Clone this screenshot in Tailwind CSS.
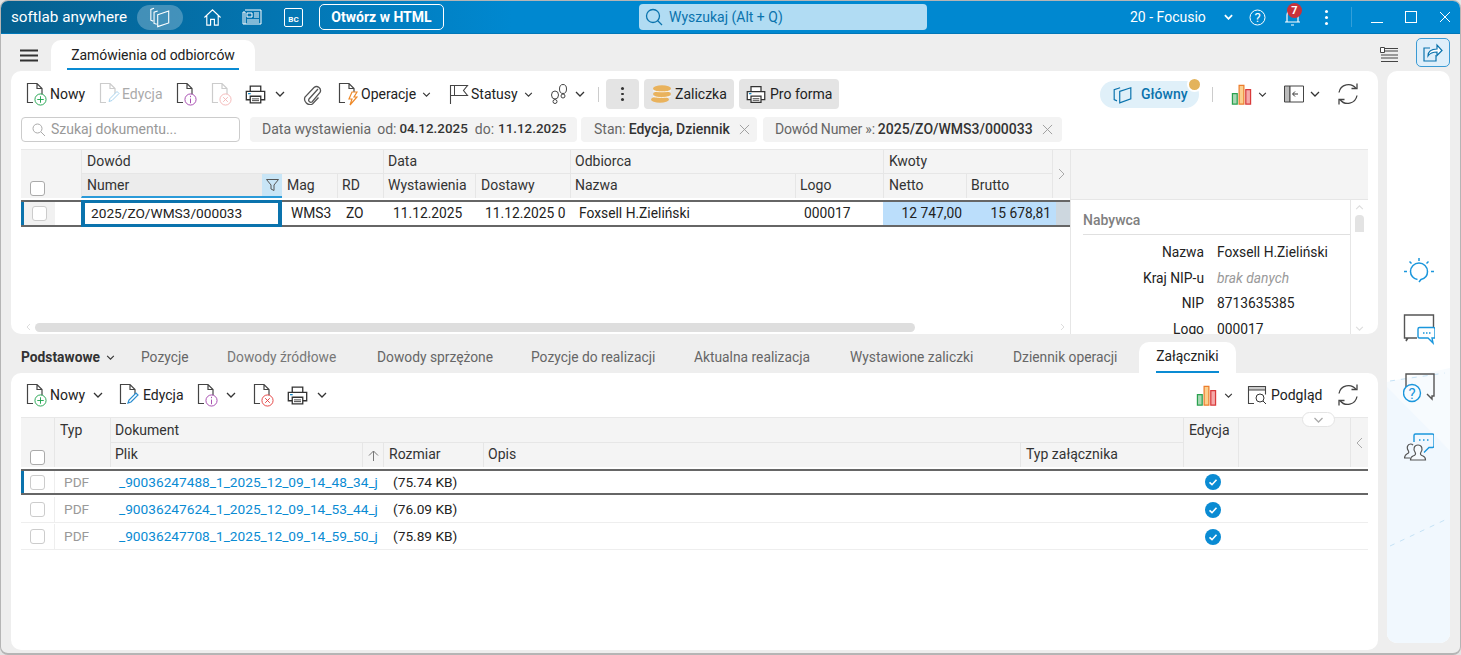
<!doctype html>
<html lang="pl">
<head>
<meta charset="utf-8">
<title>softlab anywhere</title>
<script src="https://cdn.jsdelivr.net/npm/@tailwindcss/browser@4"></script>
</head>
<body class="w-[1461px] h-[655px] overflow-hidden bg-[#e4e4e4] font-['Roboto',sans-serif] text-[14px] text-[#222]">
<svg class="hidden">
  <symbol id="doc" viewBox="0 0 21 24"><path d="M7 20.500H1.500v-19h9.500l5 5v6M11 1.500v5h5" fill="none" stroke="currentColor" stroke-width="1.200"/></symbol>
  <symbol id="print" viewBox="0 0 24 24"><path d="M6 8V2.500h12V8M6 18H1.500V8.500h21V18H18M6 14h12v7.500H6z" fill="#fff" stroke="#333" stroke-width="1.500"/><path d="M8 17h8M8 19h8" stroke="#333"/><path d="M3.500 11h3" stroke="#0a84c6" stroke-width="1.500"/></symbol>
  <symbol id="chev" viewBox="0 0 10 6"><path d="M1 1l4 4 4-4" fill="none" stroke="currentColor" stroke-width="1.300"/></symbol>
  <symbol id="bars" viewBox="0 0 22 22"><path d="M1.500 10h5v11h-5z" fill="#a8d8b4" stroke="#2aa14f" stroke-width="1.300"/><path d="M8.500 1.500h5V21h-5z" fill="#fbd08e" stroke="#ec7d2c" stroke-width="1.300"/><path d="M15.500 6h5v15h-5z" fill="#f5a9a9" stroke="#d93a3a" stroke-width="1.300"/></symbol>
  <symbol id="refresh" viewBox="0 0 24 24"><path d="M3 10.500a9.500 9.500 0 0 1 17-4M21 13.500a9.500 9.500 0 0 1-17 4" fill="none" stroke="#444" stroke-width="1.300"/><path d="M21 1.500v5h-5.500M3 22.500v-5h5.500" fill="none" stroke="#444" stroke-width="1.300"/></symbol>
  <symbol id="stack" viewBox="0 0 24 24"><path d="M9.500 9.500l12-4v13l-12 4z" fill="none" stroke="currentColor" stroke-width="1.200"/><path d="M9.500 5.500l-4 1.300V19l3 1M5.500 2.500l-3.500 1.200V15.500l2.500 1" fill="none" stroke="currentColor" stroke-width="1.200"/></symbol>
  <symbol id="stack2" viewBox="0 0 24 24"><path d="M8.500 8l14-4.500v14l-14 5z" fill="none" stroke="currentColor" stroke-width="1.500"/><path d="M9 3.500L1.500 6v12.500l3.500 1.500" fill="none" stroke="currentColor" stroke-width="1.500"/></symbol>
  <symbol id="x" viewBox="0 0 12 12"><path d="M1 1l10 10M11 1L1 11" stroke="currentColor" stroke-width="1"/></symbol>
  <symbol id="check" viewBox="0 0 16 16"><circle cx="8" cy="8" r="8" fill="#0a8bd3"/><path d="M4.500 8.300l2.500 2.400 4.500-5" fill="none" stroke="#fff" stroke-width="1.600"/></symbol>
</svg>

<div class="w-[1461px] h-[655px] bg-[#eeeeee] border-l border-t border-r border-b-2 border-[#b5b5b5] rounded-[8px] overflow-hidden">
<!-- title bar -->
<header class="h-[33px] flex items-center text-white bg-linear-to-r from-[#05608f] via-[#0088d0] via-35% to-[#0088d0] border-b border-[#0077b8]">
  <span class="ml-[10px] w-[116px] text-[15.250px] whitespace-nowrap">softlab anywhere</span>
  <span class="ml-[10px] w-[46px] h-[25px] rounded-full bg-white/25 flex items-center justify-center">
    <svg class="w-[22px] h-[22px] text-white"><use href="#stack"/></svg>
  </span>
  <svg class="ml-[20px] w-[19px] h-[19px]" viewBox="0 0 20 20"><path d="M1.500 10L10 2l8.500 8M4 8v10h4v-6h4v6h4V8" fill="none" stroke="#fff" stroke-width="1.200"/></svg>
  <svg class="ml-[20px] w-[20px] h-[18px]" viewBox="0 0 20 18"><path d="M3 2h16v14H1V4h2v12M5 5h5v4H5zM12 5h5M12 7h5M12 9h5M5 12h12M5 14h12" fill="none" stroke="#fff" stroke-width="1"/></svg>
  <span class="ml-[22px] w-[19px] h-[19px] border border-white rounded-[2px] flex items-end justify-center text-[8px] font-bold leading-[12px]">BC</span>
  <span class="ml-[16px] w-[125px] h-[26px] border border-white rounded-[5px] flex items-center justify-center font-bold text-[14px]">Otwórz w HTML</span>
  <div class="ml-[195px] w-[288px] h-[26px] rounded-[4px] bg-[#b1dcf3] text-[#0a73ad] flex items-center">
    <svg class="ml-[6px] w-[18px] h-[18px]" viewBox="0 0 18 18"><circle cx="8" cy="8" r="6.500" fill="none" stroke="currentColor" stroke-width="1.300"/><path d="M12.500 12.500l4.500 4.500" stroke="currentColor" stroke-width="1.300"/></svg>
    <span class="ml-[6px]">Wyszukaj (Alt + Q)</span>
  </div>
  <span class="ml-[203px] w-[74px] text-[14px] whitespace-nowrap">20 - Focusio</span>
  <svg class="ml-[20px] w-[9px] h-[6px]" viewBox="0 0 10 6"><path d="M1 1l4 4 4-4" fill="none" stroke="#fff" stroke-width="2"/></svg>
  <svg class="ml-[16px] w-[17px] h-[17px]" viewBox="0 0 17 17"><circle cx="8.500" cy="8.500" r="7.500" fill="none" stroke="#fff"/><text x="8.500" y="13" text-anchor="middle" font-size="13" fill="#fff" font-family="Roboto">?</text></svg>
  <span class="relative ml-[18px] w-[17px] h-[20px]">
    <svg class="w-[17px] h-[20px]" viewBox="0 0 17 20"><path d="M1 15h15M3 15V8a5.500 5.500 0 0 1 11 0v7M7 18h3" fill="none" stroke="#fff" stroke-width="1.200"/></svg>
    <span class="absolute left-[3px] top-[-4px] w-[15px] h-[15px] rounded-full bg-[#c8323a] text-[11px] font-bold leading-[15px] text-center">7</span>
  </span>
  <span class="ml-[24px] flex flex-col gap-[3px]"><i class="block w-[3px] h-[3px] bg-white rounded-full"></i><i class="block w-[3px] h-[3px] bg-white rounded-full"></i><i class="block w-[3px] h-[3px] bg-white rounded-full"></i></span>
  <span class="ml-[23px] w-px h-[20px] bg-white/20"></span>
  <span class="ml-[19px] w-[12px] h-px bg-white mt-[10px]"></span>
  <span class="ml-[22px] w-[12px] h-[12px] border border-white"></span>
  <svg class="ml-[22px] w-[12px] h-[12px] text-white"><use href="#x"/></svg>
</header>

<div class="flex h-[619px]">
  <!-- main area -->
  <main class="ml-[10px] w-[1367px] flex flex-col mb-[3px]">
    <!-- document tab row -->
    <div class="h-[37px] flex items-end">
      <svg class="ml-[9px] mb-[9px] w-[19px] h-[13px]" viewBox="0 0 19 13"><path d="M0 1.500h18M0 6.500h18M0 11.500h18" stroke="#333" stroke-width="2"/></svg>
      <div class="ml-[12px] w-[204px] h-[31px] bg-white rounded-t-[10px] flex flex-col items-center">
        <span class="mt-[7px] leading-[16px] whitespace-nowrap tracking-[-0.05px]">Zamówienia od odbiorców</span>
        <span class="mt-[5px] w-[172px] h-[2px] bg-[#0a8bd3]"></span>
      </div>
    </div>

    <!-- upper panel -->
    <section class="h-[263px] bg-white rounded-[10px] flex flex-col">
      <!-- toolbar -->
      <div class="h-[46px] flex items-center">
        <span class="ml-[15px] relative w-[21px] h-[24px] text-[#444]">
          <svg class="w-[21px] h-[24px]"><use href="#doc"/></svg>
          <svg class="absolute left-[8px] top-[11px] w-[13px] h-[13px]" viewBox="0 0 14 14"><circle cx="7" cy="7" r="6" fill="#fff" stroke="#1ea34d"/><path d="M7 3.500v7M3.500 7h7" stroke="#1ea34d"/></svg>
        </span>
        <span class="ml-[3px] w-[35px]">Nowy</span>
        <span class="ml-[14px] relative w-[21px] h-[24px] text-[#ccc]">
          <svg class="w-[21px] h-[24px]"><use href="#doc"/></svg>
          <svg class="absolute left-[8px] top-[7px] w-[14px] h-[15px]" viewBox="0 0 14 14"><path d="M2 12l1-3 7-7 2 2-7 7z" fill="#fff" stroke="#a9d3ee"/></svg>
        </span>
        <span class="ml-[2px] w-[40px] text-[#aaa]">Edycja</span>
        <span class="ml-[14px] relative w-[21px] h-[24px] text-[#444]">
          <svg class="w-[21px] h-[24px]"><use href="#doc"/></svg>
          <svg class="absolute left-[8px] top-[11px] w-[13px] h-[13px]" viewBox="0 0 14 14"><circle cx="7" cy="7" r="6" fill="#fff" stroke="#a344ad"/><path d="M7 6v5M7 3v1.500" stroke="#a344ad"/></svg>
        </span>
        <span class="ml-[14px] relative w-[21px] h-[24px] text-[#ccc]">
          <svg class="w-[21px] h-[24px]"><use href="#doc"/></svg>
          <svg class="absolute left-[8px] top-[11px] w-[13px] h-[13px]" viewBox="0 0 14 14"><circle cx="7" cy="7" r="6" fill="#fff" stroke="#f3b5b5"/><path d="M4.500 4.500l5 5M9.500 4.500l-5 5" stroke="#f3b5b5"/></svg>
        </span>
        <svg class="ml-[13px] w-[21px] h-[21px]"><use href="#print"/></svg>
        <svg class="ml-[9px] w-[10px] h-[6px] text-[#333]"><use href="#chev"/></svg>
        <svg class="ml-[17px] w-[20px] h-[22px]" viewBox="0 0 20 22"><path d="M16 6L7 16a2.200 2.200 0 0 0 3 3l8-9.500a4 4 0 0 0-6-5L3 14a5.500 5.500 0 0 0 7.500 7l6-6.500" fill="none" stroke="#555" stroke-width="1.300"/></svg>
        <span class="ml-[16px] relative w-[21px] h-[24px] text-[#444]">
          <svg class="w-[21px] h-[24px]"><use href="#doc"/></svg>
          <svg class="absolute left-[9px] top-[9px] w-[11px] h-[15px]" viewBox="0 0 11 15"><path d="M5 1h5L7 6h3l-7 8 2-6H2z" fill="#fff" stroke="#ee8a2b" stroke-width="1.200"/></svg>
        </span>
        <span class="ml-[2px] w-[55px]">Operacje</span>
        <svg class="ml-[6px] w-[9px] h-[5px] text-[#333]"><use href="#chev"/></svg>
        <svg class="ml-[18px] w-[20px] h-[20px]" viewBox="0 0 20 20"><path d="M1.500 20V1.500h17l-4 5 4 5h-17" fill="none" stroke="#444" stroke-width="1.100"/><path d="M5.500 1.500v10" stroke="#444"/></svg>
        <span class="ml-[2px] w-[47px]">Statusy</span>
        <svg class="ml-[6px] w-[9px] h-[5px] text-[#333]"><use href="#chev"/></svg>
        <svg class="ml-[17px] w-[18px] h-[20px]" viewBox="0 0 18 20"><g fill="none" stroke="#444"><ellipse cx="13" cy="5" rx="3.500" ry="4.500"/><circle cx="13" cy="12" r="2"/><ellipse cx="5" cy="11" rx="3.500" ry="4"/><circle cx="5" cy="17.500" r="2"/></g></svg>
        <svg class="ml-[7px] w-[10px] h-[6px] text-[#333]"><use href="#chev"/></svg>
        <span class="ml-[13px] w-px h-[15px] bg-[#ccc]"></span>
        <span class="ml-[7px] w-[33px] h-[30px] rounded-[4px] bg-[#e4e4e4] flex flex-col items-center justify-center gap-[3px]"><i class="block w-[2.500px] h-[2.500px] bg-[#333] rounded-full"></i><i class="block w-[2.500px] h-[2.500px] bg-[#333] rounded-full"></i><i class="block w-[2.500px] h-[2.500px] bg-[#333] rounded-full"></i></span>
        <span class="ml-[5px] w-[90px] h-[30px] rounded-[4px] bg-[#e4e4e4] flex items-center">
          <svg class="ml-[7px] w-[20px] h-[18px]" viewBox="0 0 20 18"><g fill="#e9b25c"><ellipse cx="11" cy="3.500" rx="9" ry="3.200"/><ellipse cx="11" cy="9" rx="9" ry="3.200"/><ellipse cx="9" cy="14.500" rx="9" ry="3.200"/></g><path d="M2 5.800c3 1.300 15 1.300 18 0M2 11.500c3 1.300 14 1.300 17.500 0" fill="none" stroke="#fff" stroke-width=".8"/></svg>
          <span class="ml-[4px]">Zaliczka</span>
        </span>
        <span class="ml-[5px] w-[100px] h-[30px] rounded-[4px] bg-[#e4e4e4] flex items-center">
          <svg class="ml-[7px] w-[20px] h-[21px]"><use href="#print"/></svg>
          <span class="ml-[4px]">Pro forma</span>
        </span>
        <div class="ml-[261px] relative w-[99px] h-[27px] rounded-full bg-[#e0f0f9] text-[#0a73ad] flex items-center">
          <svg class="ml-[13px] w-[19px] h-[19px]"><use href="#stack2"/></svg>
          <span class="ml-[9px] font-medium">Główny</span>
          <span class="absolute right-[-3px] top-[-4px] w-[11px] h-[11px] rounded-full bg-[#e3b35b] border-2 border-white box-content"></span>
        </div>
        <span class="ml-[13px] w-px h-[15px] bg-[#ccc]"></span>
        <svg class="ml-[18px] w-[21px] h-[21px]"><use href="#bars"/></svg>
        <svg class="ml-[6px] w-[9px] h-[5px] text-[#333]"><use href="#chev"/></svg>
        <svg class="ml-[17px] w-[20px] h-[18px]" viewBox="0 0 20 18"><path d="M.500 1h5.500v16H.500z" fill="#bbb" stroke="#444"/><path d="M6 1h13.500v16H6z" fill="#fff" stroke="#444"/><path d="M14 9H9M11 6.500L8.500 9l2.500 2.500" fill="none" stroke="#333"/></svg>
        <svg class="ml-[6px] w-[10px] h-[6px] text-[#333]"><use href="#chev"/></svg>
        <svg class="ml-[16px] w-[24px] h-[24px]"><use href="#refresh"/></svg>
      </div>

      <!-- filter row -->
      <div class="h-[32px] flex items-start text-[#666]">
        <div class="ml-[10px] w-[219px] h-[25px] border border-[#ccc] rounded-[4px] flex items-center text-[#999]">
          <svg class="ml-[10px] w-[13px] h-[13px]" viewBox="0 0 13 13"><circle cx="5.500" cy="5.500" r="4.500" fill="none" stroke="#aaa"/><path d="M9 9l4 4" stroke="#aaa"/></svg>
          <span class="ml-[6px]">Szukaj dokumentu...</span>
        </div>
        <div class="ml-[10px] w-[327px] h-[25px] rounded-[4px] bg-[#f3f3f3] flex items-center pl-[12px] whitespace-nowrap">Data wystawienia<span class="ml-[6px]">od:</span><b class="ml-[3px] font-medium text-[#333] text-[13.400px]">04.12.2025</b><span class="ml-[7px]">do:</span><b class="ml-[4px] font-medium text-[#333] text-[13.400px]">11.12.2025</b></div>
        <div class="ml-[4px] w-[176px] h-[25px] rounded-[4px] bg-[#f3f3f3] flex items-center pl-[13px] whitespace-nowrap">Stan:<b class="ml-[3px] font-medium text-[#333]">Edycja, Dziennik</b><svg class="ml-[9px] w-[11px] h-[11px] text-[#999]"><use href="#x"/></svg></div>
        <div class="ml-[6px] w-[299px] h-[25px] rounded-[4px] bg-[#f3f3f3] flex items-center pl-[12px] whitespace-nowrap"><span class="tracking-[-0.2px]">Dowód Numer »:</span><b class="ml-[3px] font-medium text-[#333]">2025/ZO/WMS3/000033</b><svg class="ml-[9px] w-[11px] h-[11px] text-[#999]"><use href="#x"/></svg></div>
      </div>

      <!-- grid + side panel -->
      <div class="ml-[10px] w-[1347px] flex-1 min-h-0 flex border-t border-[#e8e8e8] overflow-hidden">
        <div class="w-[1049px] relative">
          <div class="h-[48px] bg-[#f4f4f4] grid grid-cols-[60px_201px_55px_46px_92px_95px_225px_88px_83px_86px_18px] grid-rows-[24px_24px] text-[#333] leading-[22px]">
            <div class="row-span-2 relative"><span class="absolute left-[9px] bottom-[2px] w-[15px] h-[15px] border border-[#aaa] rounded-[3px] bg-white"></span></div>
            <div class="col-span-3 pl-[5px] border-l border-b border-[#e6e6e6]">Dowód</div>
            <div class="col-span-2 pl-[4px] border-l border-b border-[#e6e6e6]">Data</div>
            <div class="col-span-2 pl-[4px] border-l border-b border-[#e6e6e6]">Odbiorca</div>
            <div class="col-span-2 pl-[5px] border-l border-b border-[#e6e6e6]">Kwoty</div>
            <div class="row-span-2 border-l border-[#e6e6e6] flex items-center justify-center"><svg class="w-[7px] h-[12px]" viewBox="0 0 7 12"><path d="M1 1l5 5-5 5" fill="none" stroke="#aaa"/></svg></div>
            <div class="relative pl-[5px] bg-[#ececec] border-l border-[#e6e6e6] border-b-2 border-b-[#2a9ad8]">Numer<span class="absolute right-0 top-0 w-[20px] h-[22px] bg-[#c8e5f6] flex items-center justify-center"><svg class="w-[13px] h-[12px]" viewBox="0 0 13 12"><path d="M.500 .500h12L8 6v5.500L5 10V6z" fill="none" stroke="#555"/></svg></span></div>
            <div class="pl-[5px]">Mag</div>
            <div class="pl-[4px] border-l border-[#e6e6e6]">RD</div>
            <div class="pl-[4px] border-l border-[#e6e6e6]">Wystawienia</div>
            <div class="pl-[5px] border-l border-[#e6e6e6]">Dostawy</div>
            <div class="pl-[4px] border-l border-[#e6e6e6]">Nazwa</div>
            <div class="pl-[4px] border-l border-[#e6e6e6]">Logo</div>
            <div class="pl-[5px] border-l border-[#e6e6e6]">Netto</div>
            <div class="pl-[4px] border-l border-[#e6e6e6]">Brutto</div>
          </div>
          <div class="h-[27px] mt-[2px] border-y-2 border-[#666] grid grid-cols-[60px_201px_55px_46px_92px_95px_225px_88px_83px_90px_14px] items-center whitespace-nowrap text-[#222] text-[13.800px]">
            <div class="h-full flex items-center border-l-[3px] border-[#0a73ad]"><span class="w-[31px] h-full bg-[#f1f1f1] flex items-center justify-center"><span class="w-[15px] h-[15px] border border-[#ccc] rounded-[3px] bg-white"></span></span></div>
            <div class="h-[27px] -my-[2px] border-y-[3px] border-x-4 border-[#0a73ad] pl-[6px] flex items-center bg-white text-[13.700px]">2025/ZO/WMS3/000033</div>
            <div class="pl-[9px]">WMS3</div>
            <div class="pl-[9px]">ZO</div>
            <div class="pl-[10px]">11.12.2025</div>
            <div class="pl-[10px]">11.12.2025 0</div>
            <div class="pl-[9px]">Foxsell H.Zieliński</div>
            <div class="pl-[9px]">000017</div>
            <div class="h-full bg-[#bbdefb] flex items-center justify-end pr-[4px]">12 747,00</div>
            <div class="h-full bg-[#bbdefb] flex items-center justify-end pr-[5px]">15 678,81</div>
            <div class="h-full bg-[#cdd7df]"></div>
          </div>
          <!-- bottom scrollbar -->
          <div class="absolute left-0 right-0 bottom-0 h-[14px] flex items-center">
            <svg class="ml-[5px] w-[5px] h-[8px]" viewBox="0 0 5 8"><path d="M4 1L1 4l3 3" fill="none" stroke="#ddd"/></svg>
            <span class="ml-[4px] w-[880px] h-[9px] rounded-full bg-[#dedede]"></span>
            <svg class="ml-auto mr-[5px] w-[5px] h-[8px]" viewBox="0 0 5 8"><path d="M1 1l3 3-3 3" fill="none" stroke="#ddd"/></svg>
          </div>
        </div>
        <!-- Nabywca panel -->
        <aside class="w-[298px] border-l border-[#e6e6e6] flex flex-col">
          <div class="h-[50px] bg-[#f4f4f4] border-b border-[#e6e6e6]"></div>
          <div class="flex-1 min-h-0 flex overflow-hidden">
            <div class="ml-[12px] w-[268px] overflow-hidden">
              <div class="h-[35px] pt-[12px] leading-[17px] font-medium text-[#808080] border-b border-[#e0e0e0]">Nabywca</div>
              <div class="mt-[5px] grid grid-cols-[121px_1fr] gap-x-[13px] leading-[25.500px] text-[13.800px]">
                <span class="text-right">Nazwa</span><span>Foxsell H.Zieliński</span>
                <span class="text-right">Kraj NIP-u</span><span class="italic text-[#999]">brak danych</span>
                <span class="text-right">NIP</span><span>8713635385</span>
                <span class="text-right">Logo</span><span>000017</span>
              </div>
            </div>
            <div class="w-[18px] border-l border-[#e6e6e6] flex flex-col items-center">
              <svg class="mt-[5px] w-[9px] h-[5px] text-[#ddd] rotate-180"><use href="#chev"/></svg>
              <span class="mt-[5px] w-[9px] h-[17px] rounded-t-[4px] bg-[#e3e3e3]"></span>
              <svg class="mt-auto mb-[3px] w-[9px] h-[5px] text-[#ddd]"><use href="#chev"/></svg>
            </div>
          </div>
        </aside>
      </div>
    </section>

    <!-- detail tabs -->
    <nav class="h-[39px] flex items-end whitespace-nowrap text-[#666] text-[13.800px]">
      <div class="ml-[10px] h-[31px] flex items-center font-bold text-[#333] w-[94px]">Podstawowe<svg class="ml-[6px] w-[9px] h-[5px]"><use href="#chev"/></svg></div>
      <span class="ml-[26px] w-[48px] h-[31px] leading-[30px]">Pozycje</span>
      <span class="ml-[38px] w-[111px] h-[31px] leading-[30px] text-[#777]">Dowody źródłowe</span>
      <span class="ml-[39px] w-[118px] h-[31px] leading-[30px]">Dowody sprzężone</span>
      <span class="ml-[36px] w-[126px] h-[31px] leading-[30px]">Pozycje do realizacji</span>
      <span class="ml-[37px] w-[118px] h-[31px] leading-[30px]">Aktualna realizacja</span>
      <span class="ml-[38px] w-[125px] h-[31px] leading-[30px]">Wystawione zaliczki</span>
      <span class="ml-[38px] w-[106px] h-[31px] leading-[30px]">Dziennik operacji</span>
      <div class="ml-[20px] w-[97px] h-[31px] bg-white rounded-t-[10px] flex flex-col items-center text-[#222]">
        <span class="mt-[6px] leading-[16px]">Załączniki</span>
        <span class="mt-[7px] w-[63px] h-[2px] bg-[#0a8bd3]"></span>
      </div>
    </nav>

    <!-- lower panel -->
    <section class="flex-1 bg-white rounded-[10px] flex flex-col">
      <div class="h-[44px] flex items-center">
        <span class="ml-[15px] relative w-[21px] h-[24px] text-[#444]">
          <svg class="w-[21px] h-[24px]"><use href="#doc"/></svg>
          <svg class="absolute left-[8px] top-[11px] w-[13px] h-[13px]" viewBox="0 0 14 14"><circle cx="7" cy="7" r="6" fill="#fff" stroke="#1ea34d"/><path d="M7 3.500v7M3.500 7h7" stroke="#1ea34d"/></svg>
        </span>
        <span class="ml-[3px] w-[35px]">Nowy</span>
        <svg class="ml-[8px] w-[10px] h-[6px] text-[#333]"><use href="#chev"/></svg>
        <span class="ml-[16px] relative w-[21px] h-[24px] text-[#444]">
          <svg class="w-[21px] h-[24px]"><use href="#doc"/></svg>
          <svg class="absolute left-[7px] top-[7px] w-[14px] h-[16px]" viewBox="0 0 14 14"><path d="M2 12l1-3 7-7 2 2-7 7z" fill="#fff" stroke="#2a8dd0" stroke-width="1.200"/></svg>
        </span>
        <span class="ml-[3px] w-[40px]">Edycja</span>
        <span class="ml-[14px] relative w-[21px] h-[24px] text-[#444]">
          <svg class="w-[21px] h-[24px]"><use href="#doc"/></svg>
          <svg class="absolute left-[8px] top-[11px] w-[13px] h-[13px]" viewBox="0 0 14 14"><circle cx="7" cy="7" r="6" fill="#fff" stroke="#a344ad"/><path d="M7 6v5M7 3v1.500" stroke="#a344ad"/></svg>
        </span>
        <svg class="ml-[8px] w-[10px] h-[6px] text-[#333]"><use href="#chev"/></svg>
        <span class="ml-[17px] relative w-[21px] h-[24px] text-[#444]">
          <svg class="w-[21px] h-[24px]"><use href="#doc"/></svg>
          <svg class="absolute left-[8px] top-[11px] w-[13px] h-[13px]" viewBox="0 0 14 14"><circle cx="7" cy="7" r="6" fill="#fff" stroke="#e43d3d"/><path d="M4.500 4.500l5 5M9.500 4.500l-5 5" stroke="#e43d3d"/></svg>
        </span>
        <svg class="ml-[13px] w-[21px] h-[21px]"><use href="#print"/></svg>
        <svg class="ml-[9px] w-[10px] h-[6px] text-[#333]"><use href="#chev"/></svg>
        <svg class="ml-auto w-[21px] h-[21px]"><use href="#bars"/></svg>
        <svg class="ml-[7px] w-[9px] h-[5px] text-[#333]"><use href="#chev"/></svg>
        <svg class="ml-[14px] w-[20px] h-[20px]" viewBox="0 0 20 20"><path d="M7 18.500H1.500V1.500h17v8" fill="none" stroke="#444" stroke-width="1.100"/><path d="M1.500 1.500h17V5h-17z" fill="#ccc" stroke="#444"/><circle cx="13" cy="13" r="4" fill="none" stroke="#333"/><path d="M16 16l3 3" stroke="#333"/></svg>
        <span class="ml-[4px] w-[50px]">Podgląd</span>
        <svg class="ml-[15px] mr-[18px] w-[24px] h-[24px]"><use href="#refresh"/></svg>
      </div>

      <div class="relative ml-[10px] w-[1347px] border-t border-[#e8e8e8]">
        <span class="absolute z-10 left-[1281px] top-[-6px] w-[33px] h-[15px] rounded-full border border-[#e4e4e4] bg-white flex items-center justify-center"><svg class="w-[11px] h-[6px] text-[#aaa]"><use href="#chev"/></svg></span>
        <div class="h-[49px] bg-[#f4f4f4] grid grid-cols-[33px_56px_252px_21px_100px_537px_163px_55px_112px_18px] grid-rows-[25px_24px] text-[#333] leading-[24px]">
          <div class="row-span-2 relative"><span class="absolute left-[9px] bottom-[2px] w-[15px] h-[15px] border border-[#aaa] rounded-[3px] bg-white"></span></div>
          <div class="row-span-2 pl-[5px] border-l border-[#e6e6e6]">Typ</div>
          <div class="col-span-5 pl-[4px] border-l border-b border-[#e6e6e6]">Dokument</div>
          <div class="row-span-2 pl-[5px] border-l border-[#e6e6e6]">Edycja</div>
          <div class="row-span-2 border-l border-[#e6e6e6]"></div>
          <div class="row-span-2 border-l border-[#e6e6e6] flex items-center justify-center"><svg class="w-[7px] h-[12px]" viewBox="0 0 7 12"><path d="M6 1L1 6l5 5" fill="none" stroke="#aaa"/></svg></div>
          <div class="pl-[4px] leading-[22px] border-l border-[#e6e6e6]">Plik</div>
          <div class="border-l border-[#e6e6e6] flex items-center justify-center"><svg class="w-[11px] h-[11px]" viewBox="0 0 11 11"><path d="M5.500 11V1M1 5.500L5.500 1 10 5.500" fill="none" stroke="#777"/></svg></div>
          <div class="pl-[5px] leading-[22px] border-l border-[#e6e6e6]">Rozmiar</div>
          <div class="pl-[4px] leading-[22px] border-l border-[#e6e6e6]">Opis</div>
          <div class="pl-[5px] leading-[22px] border-l border-[#e6e6e6]">Typ załącznika</div>
        </div>
        <div class="mt-[2px] h-[26px] border-y-2 border-[#666] grid grid-cols-[33px_56px_273px_800px_55px_1fr] items-center whitespace-nowrap text-[13.700px]">
          <div class="h-full border-l-[3px] border-[#0a73ad] pl-[6px] flex items-center"><span class="w-[15px] h-[15px] border border-[#ccc] rounded-[3px] bg-white"></span></div>
          <div class="h-full pl-[9px] flex items-center text-[#999] border-l border-[#eee]">PDF</div>
          <div class="pl-[9px] text-[#0a8bd3] overflow-hidden">_90036247488_1_2025_12_09_14_48_34_j</div>
          <div class="pl-[10px]">(75.74 KB)</div>
          <div class="flex justify-center pl-[5px]"><svg class="w-[16px] h-[16px]"><use href="#check"/></svg></div>
        </div>
        <div class="h-[28px] pt-[2px] border-b border-[#eee] grid grid-cols-[33px_56px_273px_800px_55px_1fr] items-center whitespace-nowrap text-[13.700px]">
          <div class="h-full pl-[9px] flex items-center"><span class="w-[15px] h-[15px] border border-[#ccc] rounded-[3px] bg-white"></span></div>
          <div class="h-full pl-[9px] flex items-center text-[#999] border-l border-[#eee]">PDF</div>
          <div class="pl-[9px] text-[#0a8bd3] overflow-hidden">_90036247624_1_2025_12_09_14_53_44_j</div>
          <div class="pl-[10px]">(76.09 KB)</div>
          <div class="flex justify-center pl-[5px]"><svg class="w-[16px] h-[16px]"><use href="#check"/></svg></div>
        </div>
        <div class="h-[27px] pt-[1px] border-b border-[#eee] grid grid-cols-[33px_56px_273px_800px_55px_1fr] items-center whitespace-nowrap text-[13.700px]">
          <div class="h-full pl-[9px] flex items-center"><span class="w-[15px] h-[15px] border border-[#ccc] rounded-[3px] bg-white"></span></div>
          <div class="h-full pl-[9px] flex items-center text-[#999] border-l border-[#eee]">PDF</div>
          <div class="pl-[9px] text-[#0a8bd3] overflow-hidden">_90036247708_1_2025_12_09_14_59_50_j</div>
          <div class="pl-[10px]">(75.89 KB)</div>
          <div class="flex justify-center pl-[5px]"><svg class="w-[16px] h-[16px]"><use href="#check"/></svg></div>
        </div>
      </div>
    </section>
  </main>

  <!-- right rail -->
  <aside class="ml-[9px] w-[63px] flex flex-col mb-[10px]">
    <div class="h-[37px] relative">
      <svg class="absolute left-[-7px] top-[13px] w-[18px] h-[16px]" viewBox="0 0 18 16"><path d="M5 1.500h13M5 4h13M1 8h17M1 11h17M1 14.500h17" stroke="#444"/><path d="M.500 .500h4v5h-4z" fill="#fff" stroke="#444"/></svg>
      <span class="absolute left-[29px] top-[4px] w-[34px] h-[29px] rounded-[5px] border border-[#3a9ad4] bg-[#dfeffa] flex items-center justify-center">
        <svg class="w-[20px] h-[19px]" viewBox="0 0 20 19"><path d="M13 12v6H1V5h6" fill="none" stroke="#0a73ad" stroke-width="1.200"/><path d="M5 13c0-5 4-7 9-7V2l5 5.500-5 5V9c-4 0-7 1-9 4z" fill="#fff" stroke="#0a73ad" stroke-width="1.200"/></svg>
      </span>
    </div>
    <div class="relative flex-1 rounded-[10px] overflow-hidden bg-white flex flex-col items-center">
      <svg class="absolute inset-0 w-[63px] h-[572px]" viewBox="0 0 63 572">
        <path d="M0 311L63 297V572H0z" fill="#f7fbfe"/>
        <path d="M0 316L63 380V572H0z" fill="#f1f8fe"/>
        <path d="M3 310L58 302M3 475L60 448" fill="none" stroke="#c5e2f5" stroke-dasharray="5 6"/>
      </svg>
      <svg class="relative mt-[186px] w-[30px] h-[28px]" viewBox="0 0 30 28"><g fill="none" stroke="#1a96dc" stroke-width="1.500"><path d="M15 25l2-2.500c4-1 6.500-4 6.500-8a8.500 8.500 0 1 0-17 0c0 4 3 7.500 7 8"/><path d="M15 1v3M5.500 4.500l2 2M24.500 4.500l-2 2M0 14.500h3M27 14.500h3"/></g></svg>
      <svg class="relative mt-[29px] w-[32px] h-[31px]" viewBox="0 0 32 31"><path d="M14 24H5l-2 3 1-3H1.500V1h29v13" fill="none" stroke="#555" stroke-width="1.400"/><path d="M15 15a1.500 1.500 0 0 1 1.500-1.500h14A1.500 1.500 0 0 1 32 15v9h-3l1 5-5-5h-8.500A1.500 1.500 0 0 1 15 22.500z" fill="#fff" stroke="#1a96dc" stroke-width="1.400"/><path d="M20 19h1.500M23 19h1.500M26 19h1.500" stroke="#1a96dc" stroke-width="1.400"/></svg>
      <svg class="relative mt-[28px] w-[32px] h-[30px]" viewBox="0 0 32 30"><path d="M3 14V1h28v22h-2v3l-5-5" fill="none" stroke="#555" stroke-width="1.400"/><circle cx="9" cy="20" r="8.500" fill="#f7fbfe" stroke="#1a96dc" stroke-width="1.400"/><text x="9" y="25.500" text-anchor="middle" font-size="15" fill="#1a96dc" font-family="Roboto">?</text></svg>
      <svg class="relative mt-[30px] w-[30px] h-[29px]" viewBox="0 0 30 29"><path d="M10 9V2.500A1.500 1.500 0 0 1 11.500 1h17A1.500 1.500 0 0 1 30 2.500V13a1.500 1.500 0 0 1-1.500 1.500H25l-5 5" fill="none" stroke="#1a96dc" stroke-width="1.400"/><path d="M15 7h1.500M19 7h1.500M23 7h1.500" stroke="#1a96dc" stroke-width="1.400"/><path d="M6 25H.500c0-2 1-3.500 3-4.500 1.500-.7 1.500-1.500.8-2.800-2-3-.8-6.700 2.200-6.700 1.200 0 2 .5 2.500 1.200" fill="none" stroke="#555" stroke-width="1.200"/><path d="M9 23c2.500-1 3-2 2.200-3.500-2.500-3.500-1-7.500 2.800-7.500s5.300 4 2.800 7.500c-.8 1.500-.3 2.500 2.200 3.500 1.500.6 2.500 2 2.500 4H6.500c0-2 1-3.400 2.500-4z" fill="#f7fbfe" stroke="#555" stroke-width="1.200"/></svg>
    </div>
  </aside>
</div>
</div>
</body>
</html>
